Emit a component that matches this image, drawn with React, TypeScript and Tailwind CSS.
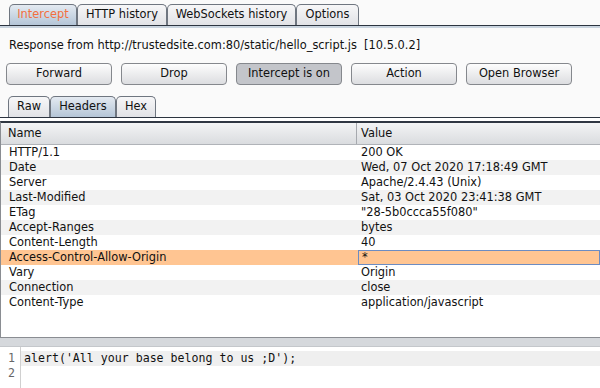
import React from "react";

const rows: [string, string][] = [
  ["HTTP/1.1", "200 OK"],
  ["Date", "Wed, 07 Oct 2020 17:18:49 GMT"],
  ["Server", "Apache/2.4.43 (Unix)"],
  ["Last-Modified", "Sat, 03 Oct 2020 23:41:38 GMT"],
  ["ETag", "\"28-5b0ccca55f080\""],
  ["Accept-Ranges", "bytes"],
  ["Content-Length", "40"],
  ["Access-Control-Allow-Origin", "*"],
  ["Vary", "Origin"],
  ["Connection", "close"],
  ["Content-Type", "application/javascript"],
];

function TopTab({ label, selected, w }: { label: string; selected?: boolean; w: string }) {
  return (
    <div
      className={
        "h-[21px] flex items-center justify-center rounded-t-[5px] border border-b-0 border-[#6f7680] " +
        w +
        (selected
          ? " bg-gradient-to-b from-[#e4eaf1] to-[#b4c5d7] text-[#f2703f]"
          : " bg-gradient-to-b from-[#f7f7f8] to-[#e1e2e6] text-[#111]")
      }
    >
      {label}
    </div>
  );
}

function Btn({ label, on }: { label: string; on?: boolean }) {
  return (
    <div
      className={
        "w-[106px] h-[22px] flex items-center justify-center rounded-[4px] border border-[#85888d] text-[#111] " +
        (on ? "bg-[#c3c5ca]" : "bg-gradient-to-b from-[#fdfdfd] to-[#dcdde0]")
      }
    >
      {label}
    </div>
  );
}

export default function App() {
  return (
    <div className="w-[600px] h-[388px] overflow-hidden bg-[#fafafa] flex flex-col text-[11.4px] text-[#111] font-['DejaVu_Sans',sans-serif] leading-none">
      {/* top tabs */}
      <div className="pt-[4px] pl-[9px] flex">
        <TopTab label="Intercept" selected w="w-[68px]" />
        <TopTab label="HTTP history" w="w-[90px]" />
        <TopTab label="WebSockets history" w="w-[129px]" />
        <TopTab label="Options" w="w-[63px]" />
      </div>
      <div className="h-[1px] bg-[#2c3440]" />
      <div className="h-[2px] bg-[#c9d4df]" />

      {/* response line */}
      <div className="h-[35px] flex items-center pl-[9px] whitespace-pre">
        Response from http://trustedsite.com:80/static/hello_script.js  [10.5.0.2]
      </div>

      {/* buttons */}
      <div className="flex pl-[6px] gap-[9px]">
        <Btn label="Forward" />
        <Btn label="Drop" />
        <Btn label="Intercept is on" on />
        <Btn label="Action" />
        <Btn label="Open Browser" />
      </div>

      {/* sub tabs */}
      <div className="mt-[11px] pl-[8px] flex items-end">
        <TopTab label="Raw" w="w-[42px]" />
        <TopTab label="Headers" selected w="w-[66px] !text-[#111]" />
        <TopTab label="Hex" w="w-[40px]" />
      </div>
      <div className="h-[1px] bg-[#2c3440]" />
      <div className="h-[3px] bg-white" />

      {/* table */}
      <div className="h-[217px] shrink-0 border-t-[2px] border-t-[#2f3742] border-l border-l-[#8a8d92] border-b border-b-[#8a8d92] bg-white flex flex-col">
        <div className="h-[22px] shrink-0 flex bg-gradient-to-b from-[#f3f4f5] to-[#dadcdf] border-b border-[#b0b3b8]">
          <div className="w-[356px] flex items-center pl-[7px] border-r border-[#a6a9ae]">Name</div>
          <div className="flex-1 flex items-center pl-[4px]">Value</div>
        </div>
        {rows.map(([n, v], i) => {
          const hl = n === "Access-Control-Allow-Origin";
          return (
            <div
              key={n}
              className={
                "h-[15px] shrink-0 flex " +
                (hl ? "bg-[#ffc592]" : i % 2 === 1 ? "bg-[#f2f2f2]" : "bg-white")
              }
            >
              <div className="w-[357px] flex items-center pl-[8px]">{n}</div>
              <div
                className={
                  "flex-1 flex items-center pl-[3px] " +
                  (hl ? "border border-[#6c8cc2]" : "")
                }
              >
                {v}
              </div>
            </div>
          );
        })}
      </div>

      {/* divider */}
      <div className="h-[9px] shrink-0 bg-[#d5d8dc] border-b border-[#c4c7cb]" />

      {/* editor */}
      <div className="flex-1 bg-white flex text-[11.6px] font-['DejaVu_Sans_Mono',monospace]">
        <div className="w-[21px] border-r border-[#d0d0d0] pt-[4px] text-[#666] flex flex-col items-end pr-[5px]">
          <div className="h-[15px] flex items-center">1</div>
          <div className="h-[15px] flex items-center">2</div>
        </div>
        <div className="flex-1 pt-[4px] flex flex-col">
          <div className="h-[15px] flex items-center pl-[3px] bg-[#efefef] whitespace-pre">
            alert('All your base belong to us ;D');
          </div>
          <div className="h-[15px]" />
        </div>
      </div>
    </div>
  );
}
